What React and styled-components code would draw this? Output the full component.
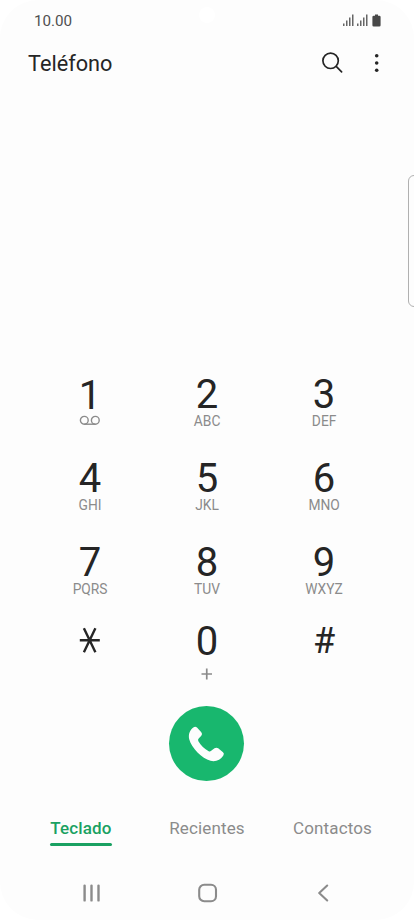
import React from 'react';
import styled, { createGlobalStyle } from 'styled-components';

const GlobalStyle = createGlobalStyle`
  * { box-sizing: border-box; }
  body { margin: 0; background: #fff; font-family: Roboto, sans-serif; }
  svg { display: block; }
`;

const Screen = styled.main`
  position: relative;
  width: 414px;
  height: 920px;
  display: flex;
  flex-direction: column;
  overflow: hidden;
  background: #fdfdfd;
  border-radius: 38px;
`;

const StatusBar = styled.div`
  height: 40px;
  padding: 0 33px 0 34px;
  display: flex;
  justify-content: space-between;
  align-items: center;
`;

const Clock = styled.time`
  font-size: 15.2px;
  line-height: 20px;
  padding-top: 1px;
  color: #505050;
`;

const CameraHole = styled.div`
  position: absolute;
  top: 7px;
  left: 199px;
  width: 16px;
  height: 16px;
  border-radius: 50%;
  background: #fff;
`;

const EdgeHandle = styled.div`
  position: absolute;
  top: 175px;
  right: -8px;
  width: 14px;
  height: 132px;
  border: 1.5px solid #b0b0b0;
  border-radius: 6px;
`;

const Header = styled.header`
  height: 46px;
  padding: 0 32px 0 28px;
  display: flex;
  justify-content: space-between;
  align-items: center;
`;

const Title = styled.h1`
  margin: 0;
  padding-top: 2px;
  font-size: 21.7px;
  font-weight: 400;
  line-height: 28px;
  color: #262626;
`;

const Actions = styled.div`
  display: flex;
  align-items: center;
  gap: 28px;
`;

const IconButton = styled.button`
  padding: 0;
  border: 0;
  background: none;
  color: #252525;
`;

const Keypad = styled.section`
  margin-top: 289px;
  padding: 0 31.4px 0 31.6px;
  display: grid;
  grid-template-columns: repeat(3, 117px);
  grid-template-rows: 84px 84px 79px 84px;
`;

const Key = styled.button`
  padding: 0;
  border: 0;
  background: none;
  font-family: inherit;
  display: flex;
  flex-direction: column;
  align-items: center;
  justify-content: flex-start;
`;

const Digit = styled.span`
  height: 39px;
  margin-top: ${(p) => p.$drop || 0}px;
  font-size: ${(p) => p.$size || 40}px;
  line-height: 40px;
  color: #252525;
`;

const Letters = styled.span`
  height: 16px;
  font-size: 13.8px;
  line-height: 15px;
  color: #8b8b8b;
`;

const PlusMark = styled.div`
  padding-top: 7px;
`;

const CallRow = styled.div`
  height: 76px;
  display: flex;
  justify-content: center;
  align-items: flex-start;
  padding-right: 0.4px;
`;

const CallButton = styled.button`
  width: 75px;
  height: 75px;
  padding: 0;
  border: 0;
  border-radius: 50%;
  background: #18b76e;
`;

const Tabs = styled.nav`
  margin-top: 35px;
  padding: 0 24px 0 23px;
  display: grid;
  grid-template-columns: 116px 136px 115px;
  justify-items: center;
`;

const Tab = styled.a`
  height: 30px;
  font-size: 17px;
  line-height: 22px;
  letter-spacing: 0.15px;
  font-weight: ${(p) => (p.$active ? 500 : 400)};
  color: ${(p) => (p.$active ? '#1aa162' : '#8b8b8b')};

  &::after {
    content: '';
    display: block;
    height: 3px;
    margin-top: 4px;
    border-radius: 2px;
    background: ${(p) => (p.$active ? '#1aa162' : 'transparent')};
  }
`;

const SystemNav = styled.div`
  margin-top: 23px;
  height: 46px;
  padding: 0 32px;
  display: grid;
  grid-template-columns: 119px 113px 118px;
  justify-items: center;
  align-items: center;
`;

const Signal = () => (
  <svg width="11" height="12" viewBox="0 0 11 12" fill="#666">
    <rect x="0" y="9.5" width="1.5" height="2.5" />
    <rect x="3" y="6.5" width="1.5" height="5.5" />
    <rect x="6" y="3.5" width="1.5" height="8.5" />
    <rect x="9" y="0.5" width="1.5" height="11.5" />
  </svg>
);

const StatusIcons = styled.div`
  display: flex;
  align-items: center;
  gap: 3px;
  height: 20px;

  svg:last-child { margin-left: 1px; }
`;

const Battery = () => (
  <svg width="9" height="13" viewBox="0 0 9 13" fill="#484848">
    <path d="M3 0.5h3v1.2h1.3q1.3 0 1.3 1.3v8.2q0 1.3-1.3 1.3H1.7q-1.3 0-1.3-1.3V3q0-1.3 1.3-1.3H3z" />
  </svg>
);

const SearchIcon = () => (
  <svg width="22" height="22" viewBox="0 0 22 22" fill="none" stroke="currentColor" strokeWidth="1.7" strokeLinecap="round">
    <circle cx="8.6" cy="8.8" r="7.7" />
    <path d="M14.2 14.4L19.6 19.8" />
  </svg>
);

const MoreIcon = () => (
  <svg width="10" height="20" viewBox="0 0 10 20" fill="currentColor">
    <circle cx="4.7" cy="2.8" r="1.8" />
    <circle cx="4.7" cy="10" r="1.8" />
    <circle cx="4.7" cy="17.2" r="1.8" />
  </svg>
);

const VoicemailIcon = () => (
  <svg width="22" height="14" viewBox="0 0 22 14" fill="none" stroke="#8b8b8b" strokeWidth="1.4">
    <circle cx="5.3" cy="5.3" r="3.9" />
    <circle cx="16.3" cy="5.3" r="3.9" />
    <path d="M5.3 9.2H16.3" />
  </svg>
);

const StarIcon = () => (
  <svg width="22" height="38" viewBox="0 0 22 38" fill="none" stroke="#252525" strokeWidth="2.4">
    <path d="M0.8 18.2H20.8M4.9 6.2L16.4 30.2M16.4 6.2L4.9 30.2" />
  </svg>
);

const PlusIcon = () => (
  <svg width="12" height="12" viewBox="0 0 12 12" fill="none" stroke="#8b8b8b" strokeWidth="1.7">
    <path d="M0.5 6H11M5.75 0.6V11.4" />
  </svg>
);

const PhoneIcon = () => (
  <svg width="75" height="75" viewBox="0 0 75 75" fill="#fdfdfd">
    <path d="M24.7 21.2Q26.4 20.1 28 21.6L32.3 26.3Q33.8 28.1 32.3 29.8L29.7 32.4Q28.5 33.6 29.4 35.3C31.8 39.4 35.5 43 39.7 45.2Q41 45.8 42.2 44.8L45.5 42.3Q47.4 41 49.2 42.3L54 46.3Q55.7 47.8 54.2 49.7C51.5 54 46.8 56 41.5 54.8C33 52.5 22.5 42 20.3 33.5C19 28.3 20.8 24 24.7 21.2Z" />
  </svg>
);

const RecentsIcon = () => (
  <svg width="18" height="18" viewBox="0 0 18 18" fill="none" stroke="#8b8b8b" strokeWidth="2.4" strokeLinecap="round">
    <path d="M1.6 1.6V16.4M8.5 1.6V16.4M15.5 1.6V16.4" />
  </svg>
);

const HomeIcon = () => (
  <svg width="20" height="20" viewBox="0 0 20 20" fill="none" stroke="#8b8b8b" strokeWidth="2.1">
    <rect x="1.2" y="1.8" width="16.8" height="16.4" rx="5" />
  </svg>
);

const BackIcon = () => (
  <svg width="12" height="18" viewBox="0 0 12 18" fill="none" stroke="#8b8b8b" strokeWidth="2.1" strokeLinecap="round" strokeLinejoin="round">
    <path d="M10.2 1.5L2.2 9L10.2 16.5" />
  </svg>
);

const KEYS = [
  { digit: '1', sub: <VoicemailIcon />, drop: 1 },
  { digit: '2', sub: 'ABC' },
  { digit: '3', sub: 'DEF' },
  { digit: '4', sub: 'GHI' },
  { digit: '5', sub: 'JKL' },
  { digit: '6', sub: 'MNO' },
  { digit: '7', sub: 'PQRS' },
  { digit: '8', sub: 'TUV' },
  { digit: '9', sub: 'WXYZ' },
  { digit: <StarIcon />, label: 'asterisco' },
  { digit: '0', sub: <PlusMark><PlusIcon /></PlusMark> },
  { digit: '#', size: 36, drop: -1 },
];

export default function App() {
  return (
    <Screen>
      <GlobalStyle />
      <StatusBar>
        <Clock>10.00</Clock>
        <StatusIcons>
          <Signal />
          <Signal />
          <Battery />
        </StatusIcons>
      </StatusBar>
      <CameraHole />
      <EdgeHandle />
      <Header>
        <Title>Teléfono</Title>
        <Actions>
          <IconButton aria-label="Buscar"><SearchIcon /></IconButton>
          <IconButton aria-label="Más opciones"><MoreIcon /></IconButton>
        </Actions>
      </Header>
      <Keypad>
        {KEYS.map((key, i) => (
          <Key key={i} aria-label={key.label}>
            <Digit $size={key.size} $drop={key.drop}>{key.digit}</Digit>
            {key.sub && <Letters>{key.sub}</Letters>}
          </Key>
        ))}
      </Keypad>
      <CallRow>
        <CallButton aria-label="Llamar"><PhoneIcon /></CallButton>
      </CallRow>
      <Tabs>
        <Tab $active>Teclado</Tab>
        <Tab>Recientes</Tab>
        <Tab>Contactos</Tab>
      </Tabs>
      <SystemNav>
        <RecentsIcon />
        <HomeIcon />
        <BackIcon />
      </SystemNav>
    </Screen>
  );
}
